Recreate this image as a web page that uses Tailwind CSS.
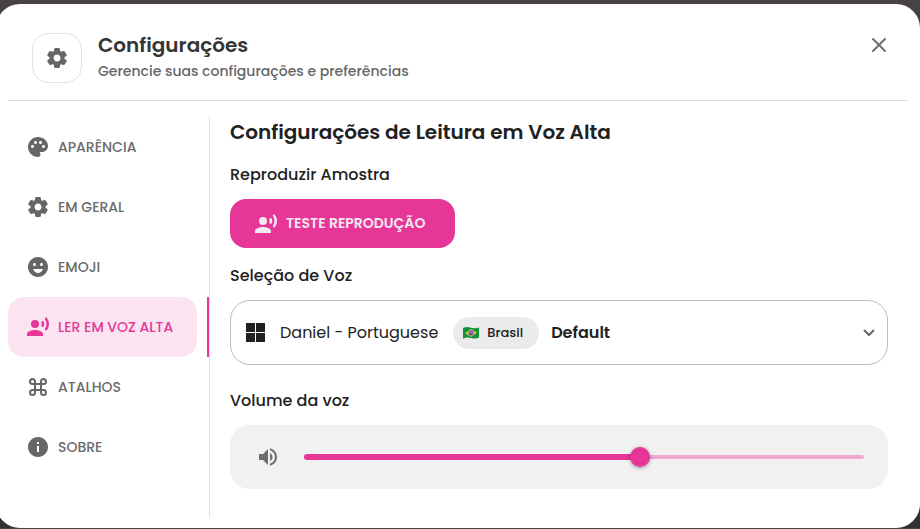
<!DOCTYPE html>
<html lang="pt-BR">
<head>
<meta charset="utf-8">
<meta name="viewport" content="width=device-width, initial-scale=1">
<title>Configurações</title>
<script src="https://cdn.jsdelivr.net/npm/@tailwindcss/browser@4"></script>
</head>
<body class="overflow-hidden bg-linear-to-b from-[#484146] to-[#333033] pt-1 font-[Poppins,Inter,sans-serif] text-[#212121]">
<svg class="hidden" aria-hidden="true">
  <symbol id="cog" viewBox="0 0 24 24"><path d="M19.5 12c0-.23-.01-.45-.03-.68l1.86-1.41c.4-.3.51-.86.26-1.3l-1.87-3.23c-.25-.44-.79-.62-1.25-.42l-2.15.91c-.37-.26-.76-.49-1.17-.68l-.29-2.31c-.06-.5-.49-.88-.99-.88h-3.73c-.51 0-.94.38-1 .88l-.29 2.31c-.41.19-.8.42-1.17.68l-2.15-.91c-.46-.2-1-.02-1.25.42L2.41 8.62c-.25.44-.14.99.26 1.3l1.86 1.41c-.02.22-.03.44-.03.67s.01.45.03.68l-1.86 1.41c-.4.3-.51.86-.26 1.3l1.87 3.23c.25.44.79.62 1.25.42l2.15-.91c.37.26.76.49 1.17.68l.29 2.31c.06.5.49.88.99.88h3.73c.5 0 .93-.38.99-.88l.29-2.31c.41-.19.8-.42 1.17-.68l2.15.91c.46.2 1 .02 1.25-.42l1.87-3.23c.25-.44.14-.99-.26-1.3l-1.86-1.41c.03-.23.04-.45.04-.68zm-7.46 3.5c-1.93 0-3.5-1.57-3.5-3.5s1.57-3.5 3.5-3.5 3.5 1.57 3.5 3.5-1.57 3.5-3.5 3.5z"/></symbol>
  <symbol id="voice" viewBox="0 0 24 24"><circle cx="9" cy="9" r="4"/><path d="M9 15c-2.67 0-8 1.34-8 4v2h16v-2c0-2.66-5.33-4-8-4z"/><path d="M15.47 7.77c.32.79.32 1.67 0 2.46-.19.47-.11 1 .25 1.36l.03.03c.58.58 1.57.46 1.95-.27.76-1.45.76-3.15-.02-4.66-.38-.74-1.38-.88-1.97-.29l-.01.01c-.34.35-.42.89-.23 1.36zM19.18 2.89c-.4.4-.46 1.02-.13 1.48 1.97 2.74 1.96 6.41-.03 9.25-.32.45-.25 1.07.14 1.46l.03.03c.49.49 1.32.45 1.74-.1 2.75-3.54 2.76-8.37 0-12.02-.42-.55-1.26-.59-1.75-.1z"/></symbol>
</svg>

<div class="-ml-1 rounded-3xl bg-white pb-[11px]">
  <header class="mx-3 flex items-start gap-4 border-b border-[#dedede] pt-[29px] pr-[17px] pb-[17px] pl-6">
    <div class="flex size-[50px] shrink-0 items-center justify-center rounded-2xl border border-[#e3e3e3]">
      <svg class="size-6 fill-[#666]" aria-hidden="true"><use href="#cog"/></svg>
    </div>
    <div class="flex-1">
      <h1 class="text-xl leading-6 font-semibold text-[#353535]">Configurações</h1>
      <p class="mt-1 text-sm leading-5 font-medium text-[#666]">Gerencie suas configurações e preferências</p>
    </div>
    <button type="button" aria-label="Fechar" class="flex size-6 items-center justify-center">
      <svg class="size-6" viewBox="0 0 24 24" fill="none" stroke="#6e6e6e" stroke-width="2" stroke-linecap="round"><path d="M6 6l12 12M18 6L6 18"/></svg>
    </button>
  </header>

  <div class="mt-4 ml-3 mr-8 flex">
    <nav class="w-[202px] shrink-0 border-r border-[#dedede] pb-10 text-sm leading-[25px] font-medium text-[#6b6b6b]">
      <button type="button" class="flex h-[60px] w-[189px] items-center gap-2 rounded-2xl pl-[18px]">
        <svg class="size-6 fill-[#666]" viewBox="0 0 24 24" aria-hidden="true"><path d="M12 2C6.49 2 2 6.49 2 12s4.49 10 10 10c1.38 0 2.5-1.12 2.5-2.5 0-.61-.23-1.2-.64-1.67-.08-.1-.13-.21-.13-.33 0-.28.22-.5.5-.5H16c3.31 0 6-2.69 6-6 0-4.96-4.49-9-10-9zm5.5 11c-.83 0-1.5-.67-1.5-1.5s.67-1.5 1.5-1.5 1.5.67 1.5 1.5-.67 1.5-1.5 1.5zm-3-4c-.83 0-1.5-.67-1.5-1.5S13.67 6 14.5 6s1.5.67 1.5 1.5S15.33 9 14.5 9zM5 11.5c0-.83.67-1.5 1.5-1.5s1.5.67 1.5 1.5S7.33 13 6.5 13 5 12.33 5 11.5zm6-4c0 .83-.67 1.5-1.5 1.5S8 8.33 8 7.5 8.67 6 9.5 6s1.5.67 1.5 1.5z"/></svg>
        APARÊNCIA
      </button>
      <button type="button" class="flex h-[60px] w-[189px] items-center gap-2 rounded-2xl pl-[18px]">
        <svg class="size-6 fill-[#666]" aria-hidden="true"><use href="#cog"/></svg>
        EM GERAL
      </button>
      <button type="button" class="flex h-[60px] w-[189px] items-center gap-2 rounded-2xl pl-[18px]">
        <svg class="size-6 fill-[#666]" viewBox="0 0 24 24" aria-hidden="true"><path d="M11.99 2C6.47 2 2 6.48 2 12s4.47 10 9.99 10C17.52 22 22 17.52 22 12S17.52 2 11.99 2zM8.5 8c.83 0 1.5.67 1.5 1.5S9.33 11 8.5 11 7 10.33 7 9.5 7.67 8 8.5 8zm8.21 6.72c-.8 1.94-2.6 3.28-4.71 3.28s-3.91-1.34-4.71-3.28c-.14-.34.11-.72.49-.72h8.45c.37 0 .62.38.48.72zM15.5 11c-.83 0-1.5-.67-1.5-1.5S14.67 8 15.5 8s1.5.67 1.5 1.5-.67 1.5-1.5 1.5z"/></svg>
        EMOJI
      </button>
      <div class="flex justify-between border-r-2 border-[#e63698]">
        <button type="button" aria-current="page" class="flex h-[60px] w-[189px] items-center gap-2 rounded-2xl bg-[#fbe3f1] pl-[18px] text-[#e63698]">
          <svg class="size-6 fill-[#e63698]" aria-hidden="true"><use href="#voice"/></svg>
          LER EM VOZ ALTA
        </button>
      </div>
      <button type="button" class="flex h-[60px] w-[189px] items-center gap-2 rounded-2xl pl-[18px]">
        <svg class="size-6" viewBox="0 0 24 24" fill="none" stroke="#666" stroke-width="2" aria-hidden="true"><path d="M9 9h6v6H9zM9 9V6.500A2.500 2.500 0 1 0 6.500 9H9M15 9V6.500A2.500 2.500 0 1 1 17.500 9H15M9 15v2.500A2.500 2.500 0 1 1 6.500 15H9M15 15v2.500A2.500 2.500 0 1 0 17.500 15H15"/></svg>
        ATALHOS
      </button>
      <button type="button" class="flex h-[60px] w-[189px] items-center gap-2 rounded-2xl pl-[18px]">
        <svg class="size-6 fill-[#666]" viewBox="0 0 24 24" aria-hidden="true"><path d="M12 2C6.480 2 2 6.480 2 12s4.480 10 10 10 10-4.480 10-10S17.520 2 12 2zm1 15h-2v-6h2v6zm0-8h-2V7h2v2z"/></svg>
        SOBRE
      </button>
    </nav>

    <main class="min-w-0 flex-1 pl-5">
      <h2 class="text-xl leading-[30px] font-semibold">Configurações de Leitura em Voz Alta</h2>
      <h3 class="mt-4 text-base leading-6 font-medium">Reproduzir Amostra</h3>
      <button type="button" class="mt-3 flex h-[49px] min-w-[225px] items-center gap-2 rounded-2xl bg-[#e63698] px-6 text-sm leading-[25px] font-semibold text-[#f4eaf1]">
        <svg class="size-6 fill-[#f1eaf0]" aria-hidden="true"><use href="#voice"/></svg>
        TESTE REPRODUÇÃO
      </button>

      <label for="voz" class="mt-4 block text-base leading-6 font-medium">Seleção de Voz</label>
      <div class="relative mt-3 flex h-[65px] items-center rounded-[20px] border border-[#bdbdbd] px-[15px]">
        <svg class="size-[19px] shrink-0 fill-[#212121]" viewBox="0 0 19 19" aria-hidden="true"><path d="M0 0h9v9H0zM10 0h9v9h-9zM0 10h9v9H0zM10 10h9v9h-9z"/></svg>
        <span class="ml-[15px] text-base">Daniel - Portuguese</span>
        <span class="ml-[15px] flex h-8 items-center gap-2 rounded-full bg-[#ebebeb] pr-4 pl-[10px] text-[13px] leading-5 font-medium">
          <svg class="h-3 w-4" viewBox="0 0 16 12" aria-hidden="true"><path d="M0 1.200C3-.5 5 0 8 .7s5 .8 8-.2v10.300c-3 1-5 .9-8 .2s-5-1-8 .7z" fill="#12923f"/><path d="M2 6.200L8 1.900l6 3.900-6 4.300z" fill="#e9bd3f"/><circle cx="8" cy="6" r="2.600" fill="#5d5aa6"/><path d="M5.600 5.300c1.600-.4 3.400.1 4.700 1.700" fill="none" stroke="#d8ccd0" stroke-width=".6"/></svg>
          Brasil
        </span>
        <span class="ml-3 text-base font-semibold">Default</span>
        <svg class="ml-auto size-5 -mr-[7px]" viewBox="0 0 20 20" fill="none" stroke="#666" stroke-width="2" stroke-linecap="round" stroke-linejoin="round" aria-hidden="true"><path d="M5.500 7.500l4.500 4.500 4.500-4.500"/></svg>
        <select id="voz" class="absolute inset-0 size-full cursor-pointer opacity-0">
          <option>Daniel - Portuguese (Brasil)</option>
        </select>
      </div>

      <label for="volume" class="mt-6 block text-base leading-6 font-medium">Volume da voz</label>
      <div class="mt-3 flex h-16 items-center gap-6 rounded-[20px] bg-[#f1f1f1] pr-6 pl-[26px]">
        <svg class="size-6 shrink-0 fill-[#6e6e6e]" viewBox="0 0 24 24" aria-hidden="true"><path d="M3 9v6h4l5 5V4L7 9H3zm13.500 3c0-1.770-1.020-3.290-2.500-4.030v8.050c1.480-.73 2.500-2.250 2.500-4.020zM14 3.230v2.060c2.890.86 5 3.540 5 6.710s-2.110 5.850-5 6.710v2.060c4.010-.91 7-4.490 7-8.770s-2.990-7.860-7-8.770z"/></svg>
        <div class="relative flex h-5 flex-1 items-center">
          <div class="absolute inset-x-0 h-1 rounded-full bg-[#efa8d2]"></div>
          <div class="absolute left-0 h-1.5 w-3/5 rounded-full bg-[#e63698]"></div>
          <input id="volume" type="range" min="0" max="100" value="60" class="absolute -left-2.5 h-5 w-[calc(100%+20px)] appearance-none bg-transparent [&::-webkit-slider-thumb]:size-5 [&::-webkit-slider-thumb]:appearance-none [&::-webkit-slider-thumb]:rounded-full [&::-webkit-slider-thumb]:bg-[#e63698] [&::-webkit-slider-thumb]:shadow-[0_1px_4px_rgba(0,0,0,0.35)]">
        </div>
      </div>
    </main>
  </div>
</div>
</body>
</html>
